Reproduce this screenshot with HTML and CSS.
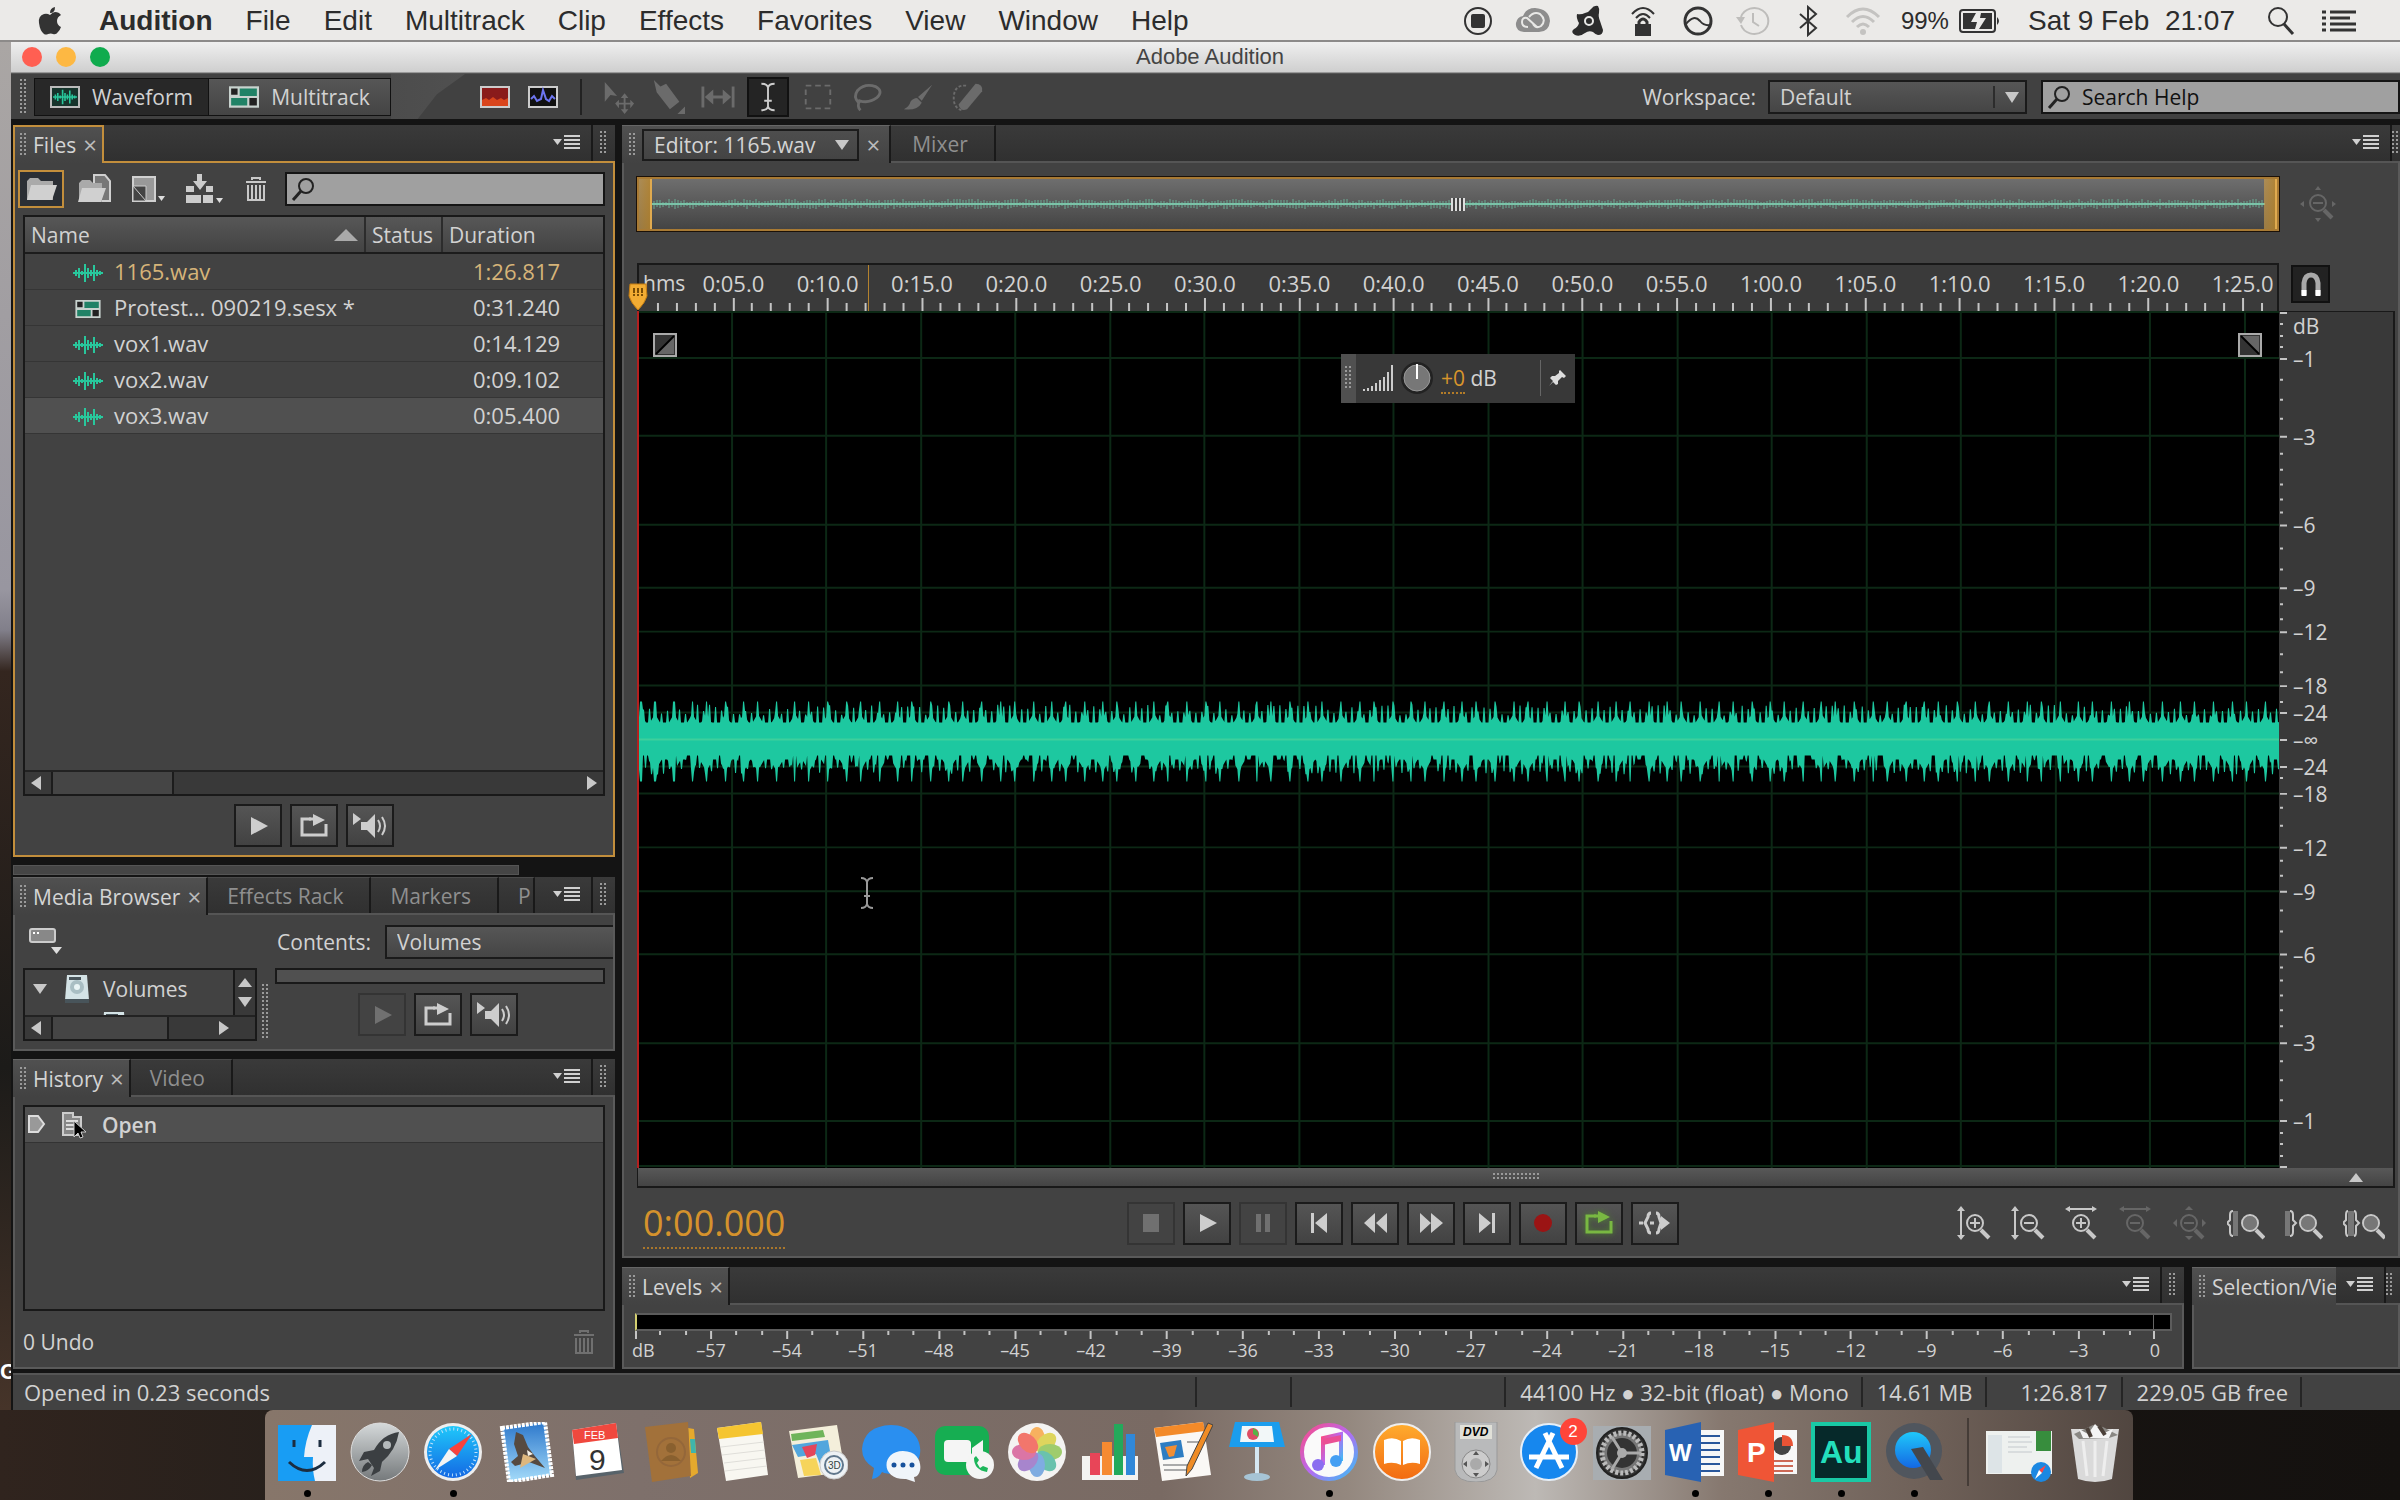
FILE: index.html
```html
<!DOCTYPE html>
<html lang="en">
<head>
<meta charset="utf-8">
<title>Adobe Audition</title>
<link rel="stylesheet" href="styles.css">
</head>
<body>
<svg class="defs" aria-hidden="true">
  <symbol id="wave" viewBox="0 0 30 20"><path d="M0 10h30M3 7v6M6 5v10M9 8v4M12 1v18M15 5v10M18 7v6M21 2v16M24 7v6M27 8v4" fill="none" stroke="#28c79c" stroke-width="2"/></symbol>
  <symbol id="multi" viewBox="0 0 28 20"><path d="M0 0h28v20H0z" fill="#c8d2ce"/><path d="M2 2h6v6H2zM19 11h7v7h-7z" fill="#222"/><path d="M10 2h16v7H10zM2 11h15v7H2z" fill="#208266"/></symbol>
  <symbol id="play" viewBox="0 0 30 24"><path d="M8 3v18l17-9z" fill="currentColor"/></symbol>
  <symbol id="loop" viewBox="0 0 30 24"><path d="M12 5H3v16h24V10" fill="none" stroke="currentColor" stroke-width="3"/><path d="M14 0l12 6-12 6z" fill="currentColor"/><path d="M10 5h6" stroke="currentColor" stroke-width="3"/></symbol>
  <symbol id="speaker" viewBox="0 0 34 26"><path d="M0 0l8 6-8 6zM8 9h6l8-8v24l-8-8H8z" fill="currentColor"/><path d="M25 7q4 6 0 12M29 4q6 9 0 18" fill="none" stroke="currentColor" stroke-width="2"/></symbol>
  <symbol id="menu" viewBox="0 0 28 18"><path d="M0 5h9l-4.500 6z" fill="currentColor"/><path d="M11 2h16M11 6h16M11 10h16M11 14h16" stroke="currentColor" stroke-width="2"/></symbol>
  <symbol id="find" viewBox="0 0 26 24"><circle cx="16" cy="9" r="7" fill="none" stroke="#222" stroke-width="2"/><path d="M11 14l-8 9" stroke="#222" stroke-width="3"/></symbol>
  <symbol id="trash" viewBox="0 0 22 24"><path d="M7 3V1h8v2M1 5h20M3 8v15h16V8" fill="none" stroke="currentColor" stroke-width="2"/><path d="M7 8v14M11 8v14M15 8v14" stroke="currentColor" stroke-width="2"/></symbol>
  <symbol id="lens" viewBox="0 0 30 30"><circle cx="12" cy="12" r="8" fill="none" stroke="currentColor" stroke-width="2"/><path d="M18 19l8 8" stroke="currentColor" stroke-width="4"/></symbol>
  <symbol id="disk" viewBox="0 0 26 30"><path d="M3 1h20l2 25H1z" fill="#d4e3e6"/><circle cx="13" cy="13" r="7" fill="#a9bec3"/><circle cx="13" cy="13" r="3" fill="#e9f4f5"/><path d="M5 3h12v3H5zM1 25h24v4H1z" fill="#48545a"/></symbol>
  <linearGradient id="steel" x2="0" y2="1"><stop stop-color="#d5d9da"/><stop offset="1" stop-color="#75797b"/></linearGradient>
  <linearGradient id="blue" x2="0" y2="1"><stop stop-color="#1fc8fa"/><stop offset="1" stop-color="#1468e4"/></linearGradient>
  <linearGradient id="sky" x2="0" y2="1"><stop stop-color="#2c77cb"/><stop offset="1" stop-color="#a5dcfa"/></linearGradient>
  <linearGradient id="amber" x2="0" y2="1"><stop stop-color="#ffac2e"/><stop offset="1" stop-color="#f26a12"/></linearGradient>
  <linearGradient id="ring" x2="1" y2="1"><stop stop-color="#fb4a84"/><stop offset=".5" stop-color="#b66af2"/><stop offset="1" stop-color="#35c3f6"/></linearGradient>
</svg>

<header class="menubar">
  <svg class="apple" width="26" height="30" viewBox="0 0 26 30"><path d="M18 1q-5 1-5 6 5 0 5-6zM13 9q-3-2-6-1Q1 10 2 17q1 8 5 11 2 1 4 0 3-1 5 0 3 1 5-2 2-2 3-5-4-2-4-6t4-6q-2-3-6-3-2 0-5 3z" fill="#333"/></svg>
  <nav class="menus"><b>Audition</b><a href="#">File</a><a href="#">Edit</a><a href="#">Multitrack</a><a href="#">Clip</a><a href="#">Effects</a><a href="#">Favorites</a><a href="#">View</a><a href="#">Window</a><a href="#">Help</a></nav>
  <div class="tray">
    <svg viewBox="0 0 36 32"><circle cx="18" cy="16" r="13" fill="none" stroke="#333" stroke-width="2"/><rect x="11" y="9" width="14" height="14" rx="2" fill="#333"/></svg>
    <svg viewBox="0 0 36 32"><path d="M9 27Q0 26 1 18q1-6 7-7Q11 3 20 3q14 1 15 13-1 11-11 11z" fill="#8d8d8d"/><path d="M22 22L12 13q-5-1-5 4t6 5M14 12q5-6 11-3 7 6 1 12-5 3-8-2" fill="none" stroke="#e8e8e6" stroke-width="2"/></svg>
    <svg viewBox="0 0 36 32"><path d="M28 1q2 3 1 7-1 3 1 8l3 9q0 5-5 5-2 0-5-3-4-2-8 1-5 4-10 2-5-3-1-6 4-2 5-6-3-5-2-9 4 1 8-1 4-1 6-4 3-4 7-3z" fill="#2c2c2c"/><circle cx="19" cy="16" r="4" fill="none" stroke="#e8e8e6" stroke-width="2"/></svg>
    <svg viewBox="0 0 36 32"><path d="M7 9Q18-3 29 9M11 13q7-8 14 0" fill="none" stroke="#333" stroke-width="2"/><path d="M14 20v-3q4-6 8 0v3" fill="none" stroke="#333" stroke-width="3"/><path d="M10 19h16v12H10z" fill="#333"/></svg>
    <svg viewBox="0 0 36 32"><circle cx="18" cy="16" r="13" fill="none" stroke="#333" stroke-width="3"/><path d="M6 19q8-10 14-3 4 5 10 4" fill="none" stroke="#333" stroke-width="2"/></svg>
    <svg viewBox="0 0 36 32"><path d="M6 20a14 13 0 1 0 0-8M18 8v9l6 4" fill="none" stroke="#bebdbb" stroke-width="2"/><path d="M1 12h9l-4 7z" fill="#bebdbb"/></svg>
    <svg viewBox="0 0 36 32"><path d="M10 9l16 14-8 7V2l8 7-16 14" fill="none" stroke="#333" stroke-width="2"/></svg>
    <svg viewBox="0 0 36 32"><path d="M2 12Q18-4 34 12M7 17q11-11 22 0M12 22q6-6 12 0" fill="none" stroke="#c4c3c1" stroke-width="3"/><circle cx="18" cy="27" r="3" fill="#c4c3c1"/></svg>
  </div>
  <span class="battery">99%</span>
  <svg width="42" height="24" viewBox="0 0 42 24"><rect x="1" y="1" width="35" height="22" rx="3" fill="none" stroke="#333" stroke-width="2"/><path d="M4 4h13l-5 9h6l-2 7H4zM22 4h11v16H20l7-11h-6z" fill="#333"/><path d="M38 8q4 4 0 8z" fill="#333"/></svg>
  <time>Sat 9 Feb&nbsp; 21:07</time>
  <svg class="spot" width="28" height="30" viewBox="0 0 28 30"><circle cx="11" cy="11" r="9" fill="none" stroke="#333" stroke-width="2"/><path d="M17 18l9 10" stroke="#333" stroke-width="3"/></svg>
  <svg width="36" height="22" viewBox="0 0 36 22"><path d="M0 2h4M8 2h26M0 8h4M8 8h20M0 14h4M8 14h26M0 20h4M8 20h26" stroke="#333" stroke-width="3"/></svg>
</header>

<div class="desktop">
<span class="desk-label">G</span>
<main class="window">
  <div class="titlebar"><i class="red"></i><i class="yellow"></i><i class="green"></i><h1>Adobe Audition</h1></div>

  <div class="toolbar">
    <span class="grip"></span>
    <div class="modes">
      <button class="mode on"><svg width="30" height="22"><rect x="1" y="1" width="28" height="20" fill="#17342c" stroke="#bbb" stroke-width="2"/><use href="#wave" x="3" y="3" width="24" height="16"/></svg>Waveform</button>
      <button class="mode"><svg width="30" height="22"><use href="#multi" width="30" height="22"/></svg>Multitrack</button>
    </div>
    <div class="swoosh"></div>
    <div class="views">
      <button aria-label="Spectral frequency"><svg width="30" height="22"><rect x="1" y="1" width="28" height="20" fill="#8a1b1b" stroke="#ccc" stroke-width="2"/><path d="M2 20v-6l4-2 3 2 4-3 4 3 4-2 3 2 4-2v8z" fill="#d9451c"/></svg></button>
      <button aria-label="Spectral pitch"><svg width="30" height="22"><rect x="1" y="1" width="28" height="20" fill="#111" stroke="#ccc" stroke-width="2"/><path d="M3 13l3-3 3 5 4-2 2-9 3 9 3 2 3-5 3 3" fill="none" stroke="#6d75ef" stroke-width="2"/></svg></button>
    </div>
    <div class="tools">
      <button aria-label="Move"><svg viewBox="0 0 36 36"><path d="M4 2l13 15-7-1-6 7zM25 14l4 5h-3v5h5v-3l4 4-4 5v-4h-5v5h3l-4 5-4-5h3v-5h-5v4l-4-5 4-4v3h5v-5h-3z" fill="currentColor"/></svg></button>
      <button aria-label="Razor"><svg viewBox="0 0 36 36"><path d="M3 0l7 7 6-3 14 19-10 8L6 13zM28 36h8v-8z" fill="currentColor"/></svg></button>
      <button aria-label="Slip"><svg viewBox="0 0 36 36"><path d="M2 7v22M34 7v22M8 18h20" stroke="currentColor" stroke-width="3"/><path d="M13 10v16l-9-8zM23 10v16l9-8z" fill="currentColor"/></svg></button>
      <button class="on" aria-label="Time selection"><svg viewBox="0 0 36 36"><path d="M11 4q6 0 7 4 1-4 7-4M18 8v20M11 32q6 0 7-4 1 4 7 4M14 22h8" fill="none" stroke="#ccc" stroke-width="2"/></svg></button>
      <button aria-label="Marquee"><svg viewBox="0 0 36 36"><path d="M5 6h26v24H5z" fill="none" stroke="currentColor" stroke-width="2" stroke-dasharray="6 4"/></svg></button>
      <button aria-label="Lasso"><svg viewBox="0 0 36 36"><path d="M8 24Q2 18 7 11q8-8 19-4 9 5 1 12-8 6-18 3-3 6 1 10" fill="none" stroke="currentColor" stroke-width="3"/></svg></button>
      <button aria-label="Brush"><svg viewBox="0 0 36 36"><path d="M33 5L22 22l-4-4zM17 19l5 5q-5 9-19 7 6-3 7-8 3-4 7-4z" fill="currentColor"/></svg></button>
      <button aria-label="Spot healing"><svg viewBox="0 0 36 36"><path d="M26 4q8 0 7 8L17 31q-7 3-9-5z" fill="currentColor"/><path d="M16 6Q4 5 3 17t8 15" fill="none" stroke="currentColor" stroke-width="2" stroke-dasharray="3 2"/></svg></button>
    </div>
    <label class="workspace" for="ws">Workspace:</label>
    <div class="select ws"><select id="ws"><option>Default</option></select></div>
    <div class="search help"><svg width="26" height="24"><use href="#find"/></svg><input aria-label="Search Help" value="Search Help"></div>
  </div>

  <div class="work">
    <div class="left">
      <section class="panel files focus">
        <div class="tabs"><div class="tab on"><span class="grip"></span>Files<button class="x" aria-label="Close">×</button></div><div class="rest"></div><button class="pm" aria-label="Panel menu"><svg width="28" height="18"><use href="#menu"/></svg></button><div class="end"><span class="grip"></span></div></div>
        <div class="body">
          <div class="filebar">
            <button class="open" aria-label="Open file"><svg width="32" height="26"><path d="M2 24V5l3-3h8l3 3h12v19z" fill="#aaa"/><path d="M2 24L6 9h26l-5 15z" fill="#d0d0d0"/></svg></button>
            <button aria-label="Open append"><svg width="34" height="30"><path d="M17 1h11l5 6v20H17z" fill="#777" stroke="#d0d0d0" stroke-width="2"/><path d="M2 28V9l3-3h8l3 3h9v19z" fill="#aaa"/><path d="M1 28L5 14h24l-5 14z" fill="#d0d0d0"/></svg></button>
            <button aria-label="New file"><svg width="34" height="28"><path d="M2 2h22v24H2z" fill="#999" stroke="#d0d0d0" stroke-width="2"/><path d="M2 11l13 15H2zM2 11h13v15" fill="#444" stroke="#ccc"/><path d="M27 21h7l-3.500 5z" fill="#ddd"/></svg></button>
            <button aria-label="Insert into multitrack"><svg width="38" height="30"><path d="M1 12h8v6H1zM21 12h7v6h-7zM1 21h15v8H1zM18 21h10v8H18zM12 0h5v7h5l-7 9-7-9h4z" fill="#ccc"/><path d="M31 24h7l-3.500 5z" fill="#ddd"/></svg></button>
            <button class="del" aria-label="Delete"><svg width="22" height="24"><use href="#trash"/></svg></button>
            <div class="search"><svg width="26" height="24"><use href="#find"/></svg><input aria-label="Search files"></div>
          </div>
          <div class="listbox">
            <table>
              <thead><tr><th class="c1">Name<svg width="24" height="12"><path d="M0 12h24L12 0z" fill="#aaa"/></svg></th><th class="c2">Status</th><th>Duration</th></tr></thead>
              <tbody>
                <tr class="cur"><td><svg width="30" height="20"><use href="#wave"/></svg>1165.wav</td><td></td><td>1:26.817</td></tr>
                <tr><td><svg width="30" height="18"><use href="#multi"/></svg>Protest... 090219.sesx *</td><td></td><td>0:31.240</td></tr>
                <tr><td><svg width="30" height="20"><use href="#wave"/></svg>vox1.wav</td><td></td><td>0:14.129</td></tr>
                <tr><td><svg width="30" height="20"><use href="#wave"/></svg>vox2.wav</td><td></td><td>0:09.102</td></tr>
                <tr class="sel"><td><svg width="30" height="20"><use href="#wave"/></svg>vox3.wav</td><td></td><td>0:05.400</td></tr>
              </tbody>
            </table>
            <div class="hscroll"><i class="al"></i><i class="thumb"></i><i class="ar"></i></div>
          </div>
          <div class="player">
            <button class="btn" aria-label="Play"><svg width="30" height="24"><use href="#play"/></svg></button>
            <button class="btn" aria-label="Loop"><svg width="30" height="24"><use href="#loop"/></svg></button>
            <button class="btn" aria-label="Auto-play"><svg width="34" height="26"><use href="#speaker"/></svg></button>
          </div>
        </div>
      </section>
      <div class="trackbar"><i></i></div>

      <section class="panel media">
        <div class="tabs"><div class="tab on"><span class="grip"></span>Media Browser<button class="x" aria-label="Close">×</button></div><div class="tab wide">Effects Rack</div><div class="tab wide">Markers</div><div class="tab wide cut">P</div><div class="rest"></div><button class="pm" aria-label="Panel menu"><svg width="28" height="18"><use href="#menu"/></svg></button><div class="end"><span class="grip"></span></div></div>
        <div class="body">
          <div class="mediabar">
            <button aria-label="Drives"><svg width="34" height="28"><rect x="1" y="1" width="25" height="13" rx="2" fill="#888" stroke="#ccc" stroke-width="2"/><path d="M4 5h2M8 5h2" stroke="#fff" stroke-width="2"/><path d="M22 19h11l-5.500 7z" fill="#ddd"/></svg></button>
            <label for="ct">Contents:</label>
            <div class="select ct"><select id="ct"><option>Volumes</option></select></div>
          </div>
          <div class="mediagrid">
            <div class="tree">
              <div class="treemain">
                <div class="treelist"><div class="node"><i class="ad"></i><svg width="26" height="30"><use href="#disk"/></svg>Volumes</div><div class="node child"><svg width="26" height="30"><use href="#disk"/></svg></div></div>
                <div class="vscroll"><i class="au"></i><i class="ad"></i></div>
              </div>
              <div class="hscroll"><i class="al"></i><i class="thumb"></i><i class="ar"></i><i class="corner"></i></div>
            </div>
            <span class="grip split"></span>
            <div class="preview">
              <div class="strip"></div>
              <div class="player">
                <button class="btn" disabled aria-label="Play"><svg width="30" height="24"><use href="#play"/></svg></button>
                <button class="btn" aria-label="Loop"><svg width="30" height="24"><use href="#loop"/></svg></button>
                <button class="btn" aria-label="Auto-play"><svg width="34" height="26"><use href="#speaker"/></svg></button>
              </div>
            </div>
          </div>
        </div>
      </section>

      <section class="panel history">
        <div class="tabs"><div class="tab on"><span class="grip"></span>History<button class="x" aria-label="Close">×</button></div><div class="tab wide">Video</div><div class="rest"></div><button class="pm" aria-label="Panel menu"><svg width="28" height="18"><use href="#menu"/></svg></button><div class="end"><span class="grip"></span></div></div>
        <div class="body">
          <div class="listbox"><div class="step"><svg width="18" height="20"><path d="M1 1h9l6 8-6 8H1z" fill="#999" stroke="#ddd" stroke-width="2"/></svg><svg width="26" height="28"><path d="M2 2h10v4h8v18H2z" fill="#888" stroke="#ccc" stroke-width="2"/><path d="M5 10h12M5 14h12M5 18h9" stroke="#ddd" stroke-width="2"/><path d="M13 10v16l4-4 2 5 3-1-2-5h5z" fill="#000" stroke="#ccc"/></svg><b>Open</b></div></div>
          <div class="undo"><span>0 Undo</span><svg width="22" height="24"><use href="#trash"/></svg></div>
        </div>
      </section>
    </div>

    <div class="right">
      <section class="panel editor">
        <div class="tabs"><div class="tab on"><span class="grip"></span><button class="picker">Editor: 1165.wav<i class="ad"></i></button><button class="x" aria-label="Close">×</button></div><div class="tab mixer">Mixer</div><div class="rest"></div><button class="pm" aria-label="Panel menu"><svg width="28" height="18"><use href="#menu"/></svg></button><div class="end half"><span class="grip"></span></div></div>
        <div class="body">
          <div class="stage">
            <div class="overview"><svg id="mini" viewBox="0 0 1638 50" preserveAspectRatio="none"></svg><i class="handle"></i><i class="mid"></i><i class="handle"></i></div>
            <div class="side fit"><svg class="dim" width="38" height="38"><use href="#lens" x="7" y="6" width="30" height="30"/><path d="M14 18h10" stroke="currentColor" stroke-width="2"/><path d="M19 1l3 4h-6zM19 37l3-4h-6zM1 19l4-3v6zM37 19l-4-3v6z" fill="currentColor"/></svg></div>
            <div class="ruler"><svg id="ticks" viewBox="0 0 1641 46" preserveAspectRatio="none"></svg><div id="times"><span class="hms">hms</span></div><i class="hover"></i><svg class="head" width="20" height="28"><path d="M2 1h16l1 12q-2 7-9 14Q3 20 1 13z" fill="#f2ac33" stroke="#c47d12"/><path d="M6 5v8M10 5v8M14 5v8" stroke="#7a4d05" stroke-width="2" stroke-dasharray="5 1"/></svg></div>
            <div class="side snapbox"><button class="snap" aria-label="Snapping"><svg width="24" height="26"><path d="M5 24V12q1-8 7-8t7 8v12" fill="none" stroke="#aaa" stroke-width="5"/><path d="M5 25v-6M19 25v-6" stroke="#fff" stroke-width="5"/></svg></button></div>
            <div class="canvas">
              <svg id="plot" viewBox="0 0 1641 858" preserveAspectRatio="none"></svg>
              <i class="playhead"></i>
              <svg class="fade in" width="24" height="24"><path d="M1 1h22v22H1z" fill="#333" stroke="#aaa" stroke-width="2"/><path d="M3 21L21 3v18z" fill="#666"/><path d="M3 21L21 3" stroke="#000" stroke-width="2"/></svg>
              <svg class="fade out" width="24" height="24"><path d="M1 1h22v22H1z" fill="#333" stroke="#aaa" stroke-width="2"/><path d="M3 3l18 18V3z" fill="#666"/><path d="M3 3l18 18" stroke="#000" stroke-width="2"/></svg>
              <div class="hud"><span class="hgrip"><span class="grip"></span></span><svg width="30" height="26"><path d="M1 26v-2M5 26v-3M9 26v-5M13 26v-8M17 26V15M21 26V12M25 26V7M29 26V0" stroke="#ccc" stroke-width="2"/></svg><svg width="34" height="34"><circle cx="17" cy="17" r="16" fill="#222"/><circle cx="17" cy="17" r="13" fill="#777" stroke="#999"/><path d="M17 3v15" stroke="#fff" stroke-width="2"/></svg><span class="gain"><a href="#">+0</a> dB</span><svg class="pin" width="18" height="18"><path d="M11 1l6 6-2 2-2-1-4 4v3l-2 1-3-3-4 4 4-5-3-3 2-2h3l4-3V2z" fill="#ddd"/></svg></div>
              <svg class="ibeam" width="16" height="32"><path d="M2 1q5 0 6 4 1-4 6-4M8 5v22M2 31q5 0 6-4 1 4 6 4M5 19h6" fill="none" stroke="#999" stroke-width="2"/></svg>
            </div>
            <div class="scale"><svg id="dbticks" viewBox="0 0 8 858" preserveAspectRatio="none"></svg><div id="dbs"><span class="unit">dB</span></div></div>
            <div class="zoomstrip"><span class="grip"></span><i class="au"></i></div>
          </div>
          <div class="transport">
            <output><span>0:00.000</span></output>
            <div class="buttons">
              <button class="btn" disabled aria-label="Stop"><svg width="30" height="24"><path d="M7 3h16v18H7z" fill="currentColor"/></svg></button>
              <button class="btn" aria-label="Play"><svg width="30" height="24"><use href="#play"/></svg></button>
              <button class="btn" disabled aria-label="Pause"><svg width="30" height="24"><path d="M8 3h5v18H8zM17 3h5v18h-5z" fill="currentColor"/></svg></button>
              <button class="btn" aria-label="To start"><svg width="30" height="24"><path d="M7 2h3v20H7zM23 2v20l-12-10z" fill="currentColor"/></svg></button>
              <button class="btn" aria-label="Rewind"><svg width="30" height="24"><path d="M15 2v20L4 12zM27 2v20L16 12z" fill="currentColor"/></svg></button>
              <button class="btn" aria-label="Forward"><svg width="30" height="24"><path d="M4 2v20l11-10zM15 2v20l12-10z" fill="currentColor"/></svg></button>
              <button class="btn" aria-label="To end"><svg width="30" height="24"><path d="M7 2v20l12-10zM20 2h3v20h-3z" fill="currentColor"/></svg></button>
              <button class="btn" aria-label="Record"><svg width="30" height="24"><circle cx="15" cy="12" r="9" fill="#9b1414"/></svg></button>
              <button class="btn looping" aria-label="Loop"><svg width="30" height="24"><use href="#loop"/></svg></button>
              <button class="btn" aria-label="Skip selection"><svg width="32" height="26"><path d="M12 3q-3 0-3 4l-3 6 3 6q0 4 3 4M17 3q3 0 3 4l2 6-2 6q0 4-3 4M0 13h4M11 13h4" fill="none" stroke="currentColor" stroke-width="3"/><path d="M22 6l9 7-9 7z" fill="currentColor"/></svg></button>
            </div>
            <div class="zooms">
              <button aria-label="Zoom in amplitude"><svg width="34" height="34"><path d="M4 4v26M13 17h10M18 12v10" stroke="currentColor" stroke-width="2"/><path d="M4 0l4 5H0zM4 34l4-5H0z" fill="currentColor"/><use href="#lens" x="6" y="5" width="30" height="30"/></svg></button>
              <button aria-label="Zoom out amplitude"><svg width="34" height="34"><path d="M4 4v26M13 17h10" stroke="currentColor" stroke-width="2"/><path d="M4 0l4 5H0zM4 34l4-5H0z" fill="currentColor"/><use href="#lens" x="6" y="5" width="30" height="30"/></svg></button>
              <button aria-label="Zoom in time"><svg width="34" height="34"><path d="M4 3h24M11 17h10M16 12v10" stroke="currentColor" stroke-width="2"/><path d="M0 3l5-3v6zM32 3l-5-3v6z" fill="currentColor"/><use href="#lens" x="4" y="5" width="30" height="30"/></svg></button>
              <button class="dim" aria-label="Zoom out time"><svg width="34" height="34"><path d="M4 3h24M11 17h10" stroke="currentColor" stroke-width="2"/><path d="M0 3l5-3v6zM32 3l-5-3v6z" fill="currentColor"/><use href="#lens" x="4" y="5" width="30" height="30"/></svg></button>
              <button class="dim" aria-label="Zoom out full"><svg width="34" height="34"><path d="M11 17h10" stroke="currentColor" stroke-width="2"/><path d="M16 0l4 4h-8zM16 34l4-4h-8zM0 17l4-4v8zM33 17l-4-4v8z" fill="currentColor"/><use href="#lens" x="4" y="5" width="30" height="30"/></svg></button>
              <button aria-label="Zoom to in point"><svg width="38" height="34"><path d="M6 5h5v25H6z" fill="#777"/><path d="M6 5q-3 0-3 4v5l-3 3 3 3v6q0 4 3 4" fill="none" stroke="currentColor" stroke-width="2"/><circle cx="23" cy="17" r="7" fill="#777"/><use href="#lens" x="11" y="5" width="30" height="30"/></svg></button>
              <button aria-label="Zoom to out point"><svg width="38" height="34"><path d="M0 5h5v25H0z" fill="#777"/><path d="M5 5q3 0 3 4v5l3 3-3 3v6q0 4-3 4" fill="none" stroke="currentColor" stroke-width="2"/><circle cx="23" cy="17" r="7" fill="#777"/><use href="#lens" x="11" y="5" width="30" height="30"/></svg></button>
              <button aria-label="Zoom to selection"><svg width="42" height="34"><path d="M5 5h6v25H5z" fill="#777"/><path d="M5 5q-2 0-2 4v5l-3 3 3 3v6q0 4 2 4M11 5q2 0 2 4v5l3 3-3 3v6q0 4-2 4" fill="none" stroke="currentColor" stroke-width="2"/><circle cx="28" cy="17" r="7" fill="#777"/><use href="#lens" x="16" y="5" width="30" height="30"/></svg></button>
            </div>
          </div>
        </div>
      </section>
      <div class="lower">
        <section class="panel levels">
          <div class="tabs"><div class="tab on"><span class="grip"></span>Levels<button class="x" aria-label="Close">×</button></div><div class="rest"></div><button class="pm" aria-label="Panel menu"><svg width="28" height="18"><use href="#menu"/></svg></button><div class="end"><span class="grip"></span></div></div>
          <div class="body"><div class="meter"></div><div class="marks"><svg id="lticks" viewBox="0 0 1518 8" preserveAspectRatio="none"></svg><div id="lnums"><span class="first">dB</span></div></div></div>
        </section>
        <section class="panel selview">
          <div class="tabs"><div class="tab on clip"><span class="grip"></span>Selection/View</div><button class="pm" aria-label="Panel menu"><svg width="28" height="18"><use href="#menu"/></svg></button><div class="end half"><span class="grip"></span></div></div>
          <div class="body"></div>
        </section>
      </div>
    </div>
  </div>

  <footer class="status"><span class="msg">Opened in 0.23 seconds</span><span class="s1"></span><span class="s2"></span><span class="s3">44100 Hz ● 32-bit (float) ● Mono</span><span class="s4">14.61 MB</span><span class="s5">1:26.817</span><span class="s6">229.05 GB free</span></footer>
</main>
</div>

<div class="dockarea"><div class="dock">
  <button class="on" aria-label="Finder"><svg viewBox="0 0 60 60"><path d="M1 3h58v56H1z" fill="#edf1f8"/><path d="M1 3h34q-7 16-8 32h9q-1 12 2 24H1z" fill="#189df4"/><path d="M17 18v7M43 18v7M12 40q18 17 36 0" fill="none" stroke="#1c2d40" stroke-width="3"/></svg></button>
  <button aria-label="Launchpad"><svg viewBox="0 0 60 60"><circle cx="30" cy="30" r="29" fill="url(#steel)" stroke="#ddd"/><path d="M49 10q-16 2-25 18l-10 2-5 9 9-2 6 9-3 8 9-5 2-9Q46 28 49 10z" fill="#3b3f42"/><circle cx="37" cy="23" r="4" fill="#b5babc"/><path d="M18 40q-6 3-6 10 7-1 10-7z" fill="#3b3f42"/></svg></button>
  <button class="on" aria-label="Safari"><svg viewBox="0 0 60 60"><circle cx="30" cy="30" r="29" fill="#eee"/><circle cx="30" cy="30" r="26" fill="url(#blue)"/><circle cx="30" cy="30" r="23" fill="none" stroke="#bfe2fb" stroke-width="3" stroke-dasharray="1 3"/><path d="M49 12L34 34l-8-7z" fill="#f8423c"/><path d="M12 48l22-14-8-7z" fill="#f4f4f4"/></svg></button>
  <button aria-label="Mail"><svg viewBox="0 0 60 60"><path d="M6 6L49 0l7 53-43 7z" fill="url(#sky)" stroke="#fff" stroke-width="4" stroke-dasharray="3 1"/><path d="M20 10l7 3 5 12 6 8 11 13-16-6-14 4-4-4 7-6-4-12z" fill="#564a40"/><path d="M27 32l13 5-16 9z" fill="#ddb77e"/><path d="M31 28l6 4-5 2z" fill="#f4f1e8"/></svg></button>
  <button aria-label="Calendar"><svg viewBox="0 0 60 60"><path d="M3 9L47 1l8 50-48 7z" fill="#58636a"/><path d="M3 8L47 1l6 47-46 6z" fill="#fff"/><path d="M3 8L47 1l2 15L5 22z" fill="#f0483e"/><text x="15" y="17" font-size="11" fill="#fff">FEB</text><text x="20" y="48" font-size="30" fill="#333">9</text></svg></button>
  <button aria-label="Contacts"><svg viewBox="0 0 60 60"><path d="M46 6l6 1 4 44-8 5z" fill="#e5a92d"/><path d="M48 17h5l1 14h-5z" fill="#3fb5ac"/><path d="M3 5L46 0l3 54-39 6z" fill="#a2713a"/><circle cx="29" cy="30" r="14" fill="none" stroke="#94673a" stroke-width="2"/><circle cx="29" cy="26" r="5" fill="#89602f"/><path d="M19 39q10-12 20 0z" fill="#89602f"/></svg></button>
  <button aria-label="Notes"><svg viewBox="0 0 60 60"><path d="M2 6L46 0l7 53-42 6z" fill="#f8f7f1"/><path d="M2 6L46 0l2 12L4 17z" fill="#f5c531"/><path d="M6 25l43-5M7 33l43-5M9 41l42-5M10 49l42-5" stroke="#dfded9" stroke-width="1"/></svg></button>
  <button aria-label="Maps"><svg viewBox="0 0 60 60"><path d="M1 9L49 3l8 47-47 6z" fill="#f4efdb"/><path d="M3 12l32-4 2 7-33 4z" fill="#6fb45a"/><path d="M4 23l36-5 5 28-11 1-6-15-18 3z" fill="#52a6dd"/><path d="M12 38l16-2 5 17-17 1z" fill="#f6d45a"/><path d="M14 25l15-3-2 11-8 3z" fill="#e4465b"/><circle cx="46" cy="43" r="14" fill="#eef2f5" stroke="#ccc"/><circle cx="46" cy="43" r="9" fill="none" stroke="#60778c" stroke-width="2"/><text x="40" y="47" font-size="10" fill="#344">3D</text></svg></button>
  <button aria-label="Messages"><svg viewBox="0 0 60 60"><path d="M30 3c38 0 39 48 3 49q-8 0-12-2-3 6-10 7l2-11Q1 39 1 27 3 4 30 3z" fill="#2a8ff0"/><path d="M42 29c22 0 20 26 11 26l1 5-9-3c-26 1-25-28-3-28z" fill="#f0f5fa"/><path d="M33 43h0M42 43h0M51 43h0" stroke="#16519c" stroke-width="5" stroke-linecap="round"/></svg></button>
  <button aria-label="FaceTime"><svg viewBox="0 0 60 60"><rect x="1" y="4" width="54" height="49" rx="10" fill="#16ae52"/><rect x="10" y="18" width="27" height="22" rx="4" fill="#f5f5f5"/><path d="M38 26l11-8v22l-11-7z" fill="#f5f5f5"/><circle cx="46" cy="43" r="14" fill="#f4f5f4"/><path d="M40 36q0 12 13 14l1-4-5-2-3 2-3-5 2-3-3-4z" fill="#1cb65a"/></svg></button>
  <button aria-label="Photos"><svg viewBox="0 0 60 60"><circle cx="30" cy="30" r="29" fill="#f4f3f2"/><g opacity=".8"><ellipse cx="30" cy="17" rx="8" ry="12" fill="#f8a13b"/><ellipse cx="39" cy="21" rx="8" ry="12" fill="#d9ce38" transform="rotate(45 39 21)"/><ellipse cx="43" cy="30" rx="12" ry="8" fill="#8ac34c"/><ellipse cx="39" cy="39" rx="12" ry="8" fill="#48b69d" transform="rotate(45 39 39)"/><ellipse cx="30" cy="43" rx="8" ry="12" fill="#629bdd"/><ellipse cx="21" cy="39" rx="8" ry="12" fill="#946ac5" transform="rotate(45 21 39)"/><ellipse cx="17" cy="30" rx="12" ry="8" fill="#d65692"/><ellipse cx="21" cy="21" rx="12" ry="8" fill="#f2584b" transform="rotate(45 21 21)"/></g></svg></button>
  <button aria-label="Numbers"><svg viewBox="0 0 60 60"><path d="M2 34h56v24H2z" fill="#f3f2f0"/><path d="M10 31h10v22H10z" fill="#e84558"/><path d="M22 20h10v33H22z" fill="#f68a31"/><path d="M34 2h9v51h-9z" fill="#23a95b"/><path d="M46 12h9v41h-9z" fill="#3088d9"/></svg></button>
  <button aria-label="Pages"><svg viewBox="0 0 60 60"><path d="M1 6L50 0l8 53-49 6z" fill="#faf8f5"/><path d="M1 6L50 0l2 9L3 15z" fill="#f38a29"/><path d="M7 21l21-3 3 17-21 3z" fill="#2e7dc2"/><path d="M12 25l12-2-3 11-5 1z" fill="#f18e34"/><path d="M34 20h14M10 43h30M11 48h27" stroke="#aaa" stroke-width="2"/><path d="M55 1l5 2-21 44-6 7 1-10z" fill="#ef8c26" stroke="#444"/></svg></button>
  <button aria-label="Keynote"><svg viewBox="0 0 60 60"><path d="M29 25h4v30h-4z" fill="#d5e7f2"/><ellipse cx="31" cy="55" rx="13" ry="4" fill="#a6c4d5"/><path d="M9 0h44l6 25H3z" fill="#1b9ded"/><path d="M16 4h30l2 16H14z" fill="#f2f7f8"/><circle cx="27" cy="12" r="6" fill="#dd4d65"/><path d="M27 12V6q7 3 5 9z" fill="#58b447"/></svg></button>
  <button class="on" aria-label="iTunes"><svg viewBox="0 0 60 60"><circle cx="30" cy="30" r="27" fill="#fafafa" stroke="url(#ring)" stroke-width="4"/><path d="M24 43V16l18-4v27" fill="none" stroke="url(#ring)" stroke-width="4"/><path d="M24 17l18-4v6l-18 4z" fill="#ea4f94"/><circle cx="19" cy="43" r="6" fill="#8b6ef0"/><circle cx="37" cy="39" r="6" fill="#459ff3"/></svg></button>
  <button aria-label="iBooks"><svg viewBox="0 0 60 60"><circle cx="30" cy="30" r="28" fill="url(#amber)" stroke="#eee" stroke-width="2"/><path d="M29 19q-8-5-17-1v24q9-3 17 1zM31 19q8-5 17-1v24q-9-3-17 1z" fill="#fff"/></svg></button>
  <button aria-label="DVD Player"><svg viewBox="0 0 60 60"><path d="M9 0h42v48q-2 12-21 12T9 48z" fill="#b9babb" stroke="#999"/><path d="M14 3h32v14H14z" fill="#e0e0d8"/><text x="17" y="14" font-size="12" font-weight="bold" font-style="italic">DVD</text><circle cx="30" cy="42" r="14" fill="#ccc" stroke="#888"/><circle cx="30" cy="42" r="6" fill="#aaa"/><path d="M30 29l3 4h-6zM30 55l3-4h-6zM17 42l4-3v6zM43 42l-4-3v6z" fill="#555"/></svg></button>
  <button aria-label="App Store"><svg viewBox="0 0 60 60"><circle cx="30" cy="30" r="28" fill="#1687ee" stroke="#e6eff8" stroke-width="2"/><path d="M34 11L17 46M26 11l17 35M10 35h40" stroke="#fff" stroke-width="5"/></svg><span class="badge">2</span></button>
  <button aria-label="System Preferences"><svg viewBox="0 0 60 60"><path d="M1 4h58v54H1z" fill="#a8adb1"/><circle cx="30" cy="31" r="25" fill="#333" stroke="#222" stroke-width="2"/><circle cx="30" cy="31" r="20" fill="#777" stroke="#bbb" stroke-width="5" stroke-dasharray="3 2"/><circle cx="30" cy="31" r="15" fill="#333"/><path d="M30 31h19M30 31L20 15M30 31L20 47" stroke="#aaa" stroke-width="3"/><circle cx="30" cy="31" r="5" fill="#aaa"/></svg></button>
  <button class="on" aria-label="Word"><svg viewBox="0 0 60 60"><path d="M30 8h29v46H30z" fill="#f7f7f7"/><path d="M36 14h19M36 21h19M36 28h19M36 35h19M36 42h19M36 49h19" stroke="#29579b" stroke-width="2"/><path d="M0 8L36 0v60L0 53z" fill="#2862b3"/><text x="4" y="39" font-size="24" font-weight="bold" fill="#fff">W</text></svg></button>
  <button class="on" aria-label="PowerPoint"><svg viewBox="0 0 60 60"><path d="M30 8h29v44H30z" fill="#f7f7f7"/><circle cx="44" cy="24" r="9" fill="#444"/><path d="M44 24V13q11 0 11 11z" fill="#e85335"/><path d="M36 39h19M36 44h19M36 49h19" stroke="#cc6956" stroke-width="2"/><path d="M0 8L36 0v60L0 53z" fill="#ef5536"/><text x="9" y="40" font-size="28" font-weight="bold" fill="#fff">P</text></svg></button>
  <button class="on" aria-label="Audition"><svg viewBox="0 0 60 60"><path d="M2 2h56v56H2z" fill="#06292a" stroke="#19c9a5" stroke-width="4"/><text x="9" y="41" font-size="32" font-weight="bold" fill="#23dfbc">Au</text></svg></button>
  <button class="on" aria-label="QuickTime"><svg viewBox="0 0 60 60"><circle cx="30" cy="29" r="28" fill="#50565e"/><circle cx="29" cy="28" r="18" fill="url(#blue)"/><path d="M27 27l12-2 20 33H46z" fill="#43474d"/></svg></button>
  <span class="sep"></span>
  <button class="winthumb" aria-label="Minimised window"><svg viewBox="0 0 66 60"><path d="M0 9h66v43H0z" fill="#eef1ef"/><path d="M2 13h14v38H2z" fill="#dde4e7"/><path d="M22 15h22M22 20h24M22 25h19M22 30h24" stroke="#c3c8cc" stroke-width="1"/><path d="M50 9h15v20H50z" fill="#378d3d"/><circle cx="55" cy="50" r="10" fill="#1b88e2"/><path d="M60 43l-4 8-3-3z" fill="#f44"/><path d="M49 57l7-6-3-3z" fill="#fff"/></svg></button>
  <button aria-label="Trash"><svg viewBox="0 0 60 60"><path d="M6 7h48l-7 50q-17 6-34 0z" fill="#dadada"/><path d="M9 12l19-9 10 2 15 8-9 3-30 1z" fill="#898783"/><path d="M14 7l9 5 7-10 9 9 9-4-4 9H18z" fill="#f4f4f4"/><path d="M22 6l4 9M34 4l6 9" stroke="#4b4039" stroke-width="4"/><path d="M18 19l4 35M30 19v36M42 19l-4 35" stroke="#eee" stroke-width="3"/></svg></button>
</div></div>
<script src="script.js"></script>
</body>
</html>
```
FILE: styles.css
```css
* { box-sizing: border-box; }
body { margin: 0; height: 100vh; min-width: 1800px; display: flex; flex-direction: column; overflow: hidden; background: #211a17; color: #d2d2d2; font: 500 21px/28px "Open Sans", "Noto Sans", sans-serif; }
button { margin: 0; padding: 0; border: 0; background: none; color: inherit; font: inherit; display: flex; align-items: center; justify-content: center; }
svg { display: block; flex: none; }
.defs { position: absolute; width: 0; height: 0; }
.grip { flex: none; width: 8px; height: 24px; background: radial-gradient(circle at 1px 1px, #9a9a9a 1px, transparent 1px) 0 0 / 4px 4px; }
.dim { color: #666; }
.al, .ar, .au, .ad { flex: none; width: 0; height: 0; border: 7px solid transparent; }
.al { border-right: 10px solid #c8c8c8; border-left: 0; }
.ar { border-left: 10px solid #c8c8c8; border-right: 0; }
.au { border-bottom: 9px solid #c8c8c8; border-top: 0; }
.ad { border-top: 10px solid #c8c8c8; border-bottom: 0; }

/* System menu bar */
.menubar { height: 42px; flex: none; display: flex; align-items: center; padding: 1px 42px 0 37px; background: #ebeae8; border-bottom: 2px solid #8c8a89; color: #2c2c2c; font: 28px/40px "Liberation Sans", Arial, sans-serif; }
.menus { display: flex; gap: 33px; margin-left: 36px; flex: 1; }
.menus a { color: inherit; text-decoration: none; }
.tray { display: flex; gap: 19px; }
.tray svg { width: 36px; height: 32px; }
.battery { margin: 0 10px 0 20px; font-size: 24px; }
.menubar time { margin-left: 27px; white-space: nowrap; }
.spot { margin: 0 27px 0 32px; }

.desktop { flex: 1; min-height: 0; padding-left: 11px; display: flex; position: relative; background: linear-gradient(#aaa6a4, #9896a0 40%, #817f8a 43%, #34261f 46%, #1c1b19 75%, #463429); }
.desk-label { position: absolute; left: 0; bottom: 24px; width: 11px; overflow: hidden; color: #fff; font: bold 22px/28px "Liberation Sans", sans-serif; }
.window { position: relative; flex: 1; min-width: 0; display: flex; flex-direction: column; background: #141414; }
.titlebar { flex: none; height: 31px; display: flex; align-items: center; gap: 14px; padding-left: 11px; background: linear-gradient(#efefef, #cfcfcf); border-bottom: 1px solid #999; }
.titlebar i { width: 20px; height: 20px; border-radius: 50%; background: #ff5f52; }
.titlebar .yellow { background: #fdb843; }
.titlebar .green { background: #10ab4e; }
.titlebar h1 { flex: 1; margin: 0; padding-right: 104px; text-align: center; color: #444; font: 22px/28px "Liberation Sans", Arial, sans-serif; }

/* Tool bar */
.toolbar { flex: none; height: 46px; display: flex; align-items: center; padding-left: 9px; background: #414141; border-top: 1px solid #555; margin-bottom: 6px; }
.toolbar .grip { height: 36px; }
.modes { display: flex; margin-left: 6px; border: 1px solid #111; }
.mode { height: 36px; gap: 12px; background: linear-gradient(#565656, #444); width: 181px; }
.mode.on { width: 174px; background: #282828; border-right: 1px solid #111; }
.swoosh { width: 74px; height: 45px; background: linear-gradient(to right, #4c4c4c, #505050); clip-path: polygon(0 0, 100% 0, 62% 45%, 36% 100%, 0 100%); }
.views { display: flex; gap: 18px; padding: 7px 22px 7px 15px; border-right: 2px solid #222; }
.tools { display: flex; gap: 8px; margin-left: 15px; flex: 1; }
.tools button { width: 42px; height: 40px; color: #6b6b6b; }
.tools svg { width: 34px; height: 34px; }
.tools .on { background: #242424; border: 2px solid #111; }
.workspace { margin-right: 12px; }
.select { position: relative; border: 2px solid #1a1a1a; background: linear-gradient(#565656, #454545); height: 34px; display: flex; }
.select select { appearance: none; flex: 1; width: 100%; border: 0; background: none; color: inherit; font: inherit; padding: 0 10px; }
.ws { width: 259px; }
.ws::after { content: ""; position: absolute; right: 6px; top: 10px; border: 7px solid transparent; border-top: 11px solid #c8c8c8; border-bottom: 0; }
.ws::before { content: ""; position: absolute; right: 30px; top: 4px; bottom: 4px; width: 2px; background: #2c2c2c; }
.search { display: flex; align-items: center; height: 34px; border: 2px solid #151515; background: #a0a0a0; padding-left: 3px; }
.search input { flex: 1; min-width: 0; border: 0; background: none; font: inherit; color: #111; padding: 0 12px 0 10px; }
.help { width: 359px; margin-left: 14px; }

/* Panels */
.work { flex: 1; min-height: 0; display: flex; gap: 7px; padding-left: 2px; }
.left { width: 602px; flex: none; display: flex; flex-direction: column; }
.right { flex: 1; min-width: 0; display: flex; flex-direction: column; gap: 9px; }
.panel { display: flex; flex-direction: column; min-height: 0; min-width: 0; }
.body { flex: 1; min-height: 0; background: #424242; border: 2px solid #5a5a5a; border-top-color: #555; display: flex; flex-direction: column; }
.tabs { flex: none; display: flex; height: 36px; background: linear-gradient(#3a3a3a, #303030); }
.tab { flex: none; display: flex; align-items: center; white-space: nowrap; color: #8f8f8f; border-right: 2px solid #191919; border-top: 1px solid #4a4a4a; }
.tab.on { position: relative; height: 38px; margin-bottom: -2px; padding: 0 5px 0 7px; color: #d4d4d4; background: linear-gradient(#505050, #424242); border-top-color: #666; }
.tab .grip { margin-right: 5px; }
.wide { padding: 0 26px 0 19px; }
.cut { width: 36px; padding-right: 0; overflow: hidden; }
.x { margin-left: 7px; font-size: 24px; line-height: 24px; color: #bbb; }
.rest { flex: 1; }
.pm { width: 50px; color: #d0d0d0; border-right: 2px solid #191919; }
.end { width: 22px; display: flex; align-items: center; justify-content: center; }
.half { width: 8px; overflow: hidden; justify-content: flex-start; }
.focus .body { border-color: #c28e3c; }
.focus .tab.on { border: 2px solid #c28e3c; border-bottom: 0; padding: 0 5px; }

.files { flex: 732; }
.files .body { padding: 5px 8px 8px; }
.filebar { display: flex; align-items: center; gap: 20px; height: 42px; margin: 0 0 5px -5px; }
.filebar .open { width: 46px; height: 38px; border: 2px solid #c28e3c; background: #2b2f35; margin-right: -7px; }
.filebar button { flex: none; }
.filebar .search { flex: 1; margin-left: -2px; }
.del { color: #c8c8c8; margin-left: 2px; }
.listbox { flex: 1; min-height: 0; border: 2px solid #191919; display: flex; flex-direction: column; }
table { width: 100%; border-collapse: collapse; table-layout: fixed; flex: none; }
th { height: 36px; padding: 0 6px; text-align: left; font-weight: 500; background: linear-gradient(#575757, #434343); border-bottom: 2px solid #1c1c1c; position: relative; }
th + th { border-left: 2px solid #2c2c2c; }
.c1 { width: 340px; }
.c2 { width: 77px; }
th svg { position: absolute; right: 6px; top: 12px; }
td { height: 36px; padding: 0; border-bottom: 1px solid #353535; white-space: nowrap; font-size: 22px; }
td svg { display: inline-block; vertical-align: middle; margin: 0 11px 2px 48px; }
td:last-child { padding-left: 31px; }
.cur { color: #d6b479; }
.sel { background: #505050; }
.hscroll { display: flex; align-items: center; height: 24px; flex: none; margin-top: auto; border-top: 2px solid #222; background: #393939; padding: 0 6px; }
.hscroll .thumb { width: 123px; height: 22px; margin-left: 10px; background: #454545; border: 2px solid #1c1c1c; border-width: 0 2px; }
.hscroll .ar { margin-left: auto; }
.player { display: flex; gap: 8px; justify-content: center; }
.files .player { margin-top: 8px; }
.btn { width: 48px; height: 43px; border: 2px solid #1b1b1b; background: linear-gradient(#555, #424242); color: #cdcdcd; }
.btn:disabled { border-color: #343434; background: #434343; color: #707070; }
.trackbar { height: 20px; flex: none; padding: 8px 96px 2px 0; display: flex; }
.trackbar i { flex: 1; background: #454545; border: 1px solid #555; }

.media { flex: 174; }
.media .body { padding: 10px 0 8px 8px; }
.mediabar { display: flex; align-items: center; overflow: hidden; height: 34px; flex: none; padding-left: 6px; margin-bottom: 9px; }
.mediabar label { margin: 0 14px 0 auto; }
.ct { width: 228px; border-right: 0; }
.mediagrid { display: flex; flex: 1; min-height: 0; padding-right: 8px; }
.tree { width: 234px; border: 2px solid #191919; display: flex; flex-direction: column; }
.treemain { flex: 1; min-height: 0; display: flex; overflow: hidden; }
.treelist { flex: 1; overflow: hidden; }
.node { display: flex; align-items: center; gap: 13px; height: 38px; padding-left: 8px; }
.node .ad { margin-right: 4px; }
.child { padding-left: 76px; height: 36px; }
.vscroll { width: 22px; border-left: 2px solid #191919; background: #393939; display: flex; flex-direction: column; align-items: center; justify-content: space-between; padding: 8px 0; }
.tree .thumb { width: 118px; }
.corner { width: 20px; }
.split { height: 54px; margin: 16px 5px 0; }
.preview { flex: 1; }
.strip { height: 16px; border: 2px solid #191919; background: #505050; margin-bottom: 9px; }
.preview .player { margin-right: 4px; }

.history { flex: 310; margin-top: 8px; }
.history .body { padding: 8px 8px 0; }
.step { height: 36px; display: flex; align-items: center; gap: 15px; padding-left: 3px; background: #505050; border-bottom: 1px solid #333; }
.step b { font-weight: 600; }
.undo { flex: none; height: 56px; display: flex; justify-content: space-between; align-items: center; padding: 6px 10px 0 0; }
.undo svg { color: #707070; }

/* Editor */
.editor { flex: 1; }
.picker { height: 32px; gap: 20px; padding: 0 8px 0 10px; border: 2px solid #1b1b1b; }
.mixer { padding: 0 26px 0 21px; }
.editor .x { margin-right: 4px; }
.editor .body { padding: 14px 3px 0 13px; }
.stage { flex: 1; min-height: 0; display: grid; grid-template-columns: 1fr 116px; grid-template-rows: 54px 32px 48px 1fr 20px; }
.overview { display: flex; justify-content: space-between; align-items: center; position: relative; border: 2px solid #a87a34; outline: 1px solid #1b1108; background: linear-gradient(#6e6e6e, #444); }
.overview svg { position: absolute; inset: 0; width: 100%; height: 100%; }
.handle { width: 13px; height: 100%; background: linear-gradient(to right, #d3a04899, #c08a2bcc); border-right: 2px solid #e0aa4f; position: relative; }
.mid { position: relative; width: 14px; height: 13px; background: repeating-linear-gradient(to right, #ddd 0 2px, #444 2px 4px); }
.fit { padding: 8px 0 0 20px; }
.ruler { grid-row: 3; position: relative; background: #3a3a3a; border: 2px solid #191919; border-bottom: 0; }
#ticks { position: absolute; inset: 0; width: 100%; height: 100%; }
#times span { position: absolute; top: 4px; width: 80px; margin-left: -40px; text-align: center; font-size: 22px; }
#times .hms { left: 4px; margin: 0; text-align: left; font-size: 21px; }
.hover { position: absolute; left: 14%; top: 0; bottom: 0; width: 1px; background: #b5832e; }
.head { position: absolute; left: -11px; bottom: 0; z-index: 2; }
.snapbox { grid-row: 3; padding: 2px 0 0 12px; }
.snap { width: 39px; height: 38px; background: #222; border: 2px solid #111; }
.canvas { grid-row: 4; position: relative; background: #000; min-height: 0; }
#plot { position: absolute; inset: 0; width: 100%; height: 100%; }
.playhead { position: absolute; left: 0; top: 0; bottom: 0; width: 2px; background: #b32020; }
.fade { position: absolute; top: 22px; }
.in { left: 16px; }
.out { right: 17px; }
.hud { position: absolute; left: 50%; top: 5%; margin-left: -117px; width: 234px; height: 49px; display: flex; align-items: center; gap: 7px; background: #383838; padding-right: 8px; }
.hgrip { width: 15px; height: 100%; background: #505050; display: flex; align-items: center; justify-content: center; }
.gain { flex: 1; white-space: nowrap; }
.gain a { color: #d8952c; text-decoration: none; border-bottom: 2px dotted #b37c28; }
.pin { border-left: 1px solid #666; padding-left: 8px; width: 27px; height: 36px; padding-top: 9px; }
.ibeam { position: absolute; left: 13.5%; top: 66%; }
.scale { grid-row: 4; position: relative; background: #393939; border: solid #191919; border-width: 1px 2px 0 0; }
#dbticks { position: absolute; left: 1px; top: 0; width: 8px; height: 100%; }
#dbs span { position: absolute; left: 14px; margin-top: -14px; white-space: nowrap; }
#dbs .unit { top: 0; margin: 0; }
.zoomstrip { grid-row: 5; grid-column: 1 / 3; position: relative; display: flex; align-items: center; justify-content: center; background: linear-gradient(#585858, #444); border: solid #191919; border-width: 0 2px 2px 1px; }
.zoomstrip .grip { width: 46px; height: 8px; }
.zoomstrip .au { position: absolute; right: 30px; top: 5px; }
.transport { flex: none; height: 68px; display: flex; align-items: center; padding: 2px 10px 0 6px; }
.transport output { width: 484px; color: #d5922c; font-size: 36px; font-weight: 400; line-height: 36px; }
.transport output span { border-bottom: 2px dotted #a9762b; }
.buttons { display: flex; gap: 8px; flex: none; }
.looping { color: #79b842; }
.looping svg { filter: drop-shadow(0 0 3px #4f8a2a); }
.zooms { flex: 1; display: flex; justify-content: flex-end; gap: 20px; color: #c8c8c8; }

.lower { flex: none; height: 102px; display: flex; gap: 8px; }
.levels { flex: 1; }
.selview { width: 208px; }
.clip { width: 144px; overflow: hidden; border-right: 0; }
.levels .body { padding: 8px 10px 0 11px; }
.meter { height: 18px; background: linear-gradient(to left, transparent 16px, #666 16px, #666 17px, transparent 17px), #000; border: 2px solid #5c5c5c; border-left-color: #d4cf70; }
.marks { position: relative; height: 36px; margin-right: 17px; }
#lticks { width: 100%; height: 8px; }
#lnums span { position: absolute; top: 7px; width: 60px; margin-left: -30px; text-align: center; font-size: 18px; line-height: 24px; }
#lnums .first { left: 0; margin: 0; text-align: left; margin-left: -3px; }

.status { flex: none; display: flex; align-items: center; height: 37px; margin-top: 4px; margin-left: 2px; padding: 0 98px 2px 0; background: #424242; border-top: 2px solid #555; white-space: nowrap; font-size: 22px; }
.status span { height: 30px; line-height: 30px; border-right: 2px solid #252525; }
.msg { flex: 1; padding-left: 11px; }
.s1 { width: 95px; }
.s2 { width: 214px; }
.s3, .s4, .s6 { padding: 0 12px 0 14px; }
.s5 { padding: 0 13px 0 34px; }

/* Dock */
.dockarea { flex: none; height: 90px; padding: 0 267px 0 265px; background: linear-gradient(to right, #30241e, #251f1b 15%, #14110f); }
.dock { display: flex; align-items: center; justify-content: space-between; height: 90px; padding: 0 8px 6px 12px; border-radius: 8px 8px 0 0; background: linear-gradient(to right, #87766a, #7e706b 20%, #796a63 48%, #94887f 58%, #bdb9b5 68%, #86786f 78%, #6c5e56 90%, #514640); }
.dock button { position: relative; width: 60px; height: 60px; }
.dock svg { width: 60px; height: 60px; font-family: "Liberation Sans", sans-serif; }
.dock .on::after { content: ""; position: absolute; bottom: -15px; left: 27px; width: 7px; height: 7px; border-radius: 50%; background: #000; }
.dock .winthumb, .dock .winthumb svg { width: 66px; }
.sep { width: 2px; height: 68px; background: #453c37; margin: 0 4px 0 10px; }
.badge { position: absolute; right: -8px; top: -4px; width: 27px; height: 27px; border-radius: 50%; background: #ff4539; color: #fff; font: 17px/27px "Liberation Sans", sans-serif; text-align: center; }
```
FILE: script.js
```js
const $ = id => document.getElementById(id);
const line = (d, stroke, w) => `<path d="${d}" fill="none" stroke="${stroke}" stroke-width="${w}"/>`;
const W = 1641, H = 858, MID = 429, LENGTH = 86.817;
const pxPerSec = W / LENGTH;

// Time ruler
let minor = "", major = "", grid = "";
for (let s = 1; s < LENGTH; s++) {
  const x = Math.round(s * pxPerSec);
  if (s % 5) { minor += `M${x} 38v8`; continue; }
  major += `M${x} 33v13`;
  grid += `M${x} 0v${H}`;
  const label = document.createElement("span");
  label.textContent = `${Math.floor(s / 60)}:${String(s % 60).padStart(2, "0")}.0`;
  label.style.left = (s / LENGTH * 100) + "%";
  $("times").append(label);
}
$("ticks").innerHTML = line(minor + major, "#c4c4c4", 2);

// Amplitude scale
const level = db => Math.pow(10, db / 20) * MID;
let ticks = "M0 1h7M0 857h7M0 429h7";
for (const db of [-.25, -.5, -.75, -1.5, -2, -2.5, -3.5, -4, -4.5, -5, -5.5, -7, -8, -10, -11, -14, -16, -21])
  for (const y of [MID - level(db), MID + level(db)]) ticks += `M0 ${Math.round(y)}h3`;
const place = (text, y) => {
  const s = document.createElement("span");
  s.textContent = text;
  s.style.top = (y / H * 100) + "%";
  $("dbs").append(s);
};
grid += `M0 1h${W}M0 ${H - 2}h${W}`;
for (const db of [1, 3, 6, 9, 12, 18, 24])
  for (const y of [MID - level(-db), MID + level(-db)]) {
    place("–" + db, y);
    ticks += `M0 ${Math.round(y)}h7`;
    grid += `M0 ${Math.round(y)}h${W}`;
  }
place("–∞", MID);
$("dbticks").innerHTML = line(ticks, "#c4c4c4", 2);

// Waveform: three loud peaks in each beat, with smaller spikes between them
const BEAT = 51.3, PEAKS = [4, 18, 37, 55.3, -14.3];
const noise = n => { const v = Math.sin(n * 12.9898) * 43758.5453; return v - Math.floor(v); };
let top_ = "", bottom = "";
for (let x = 0; x <= W; x += 1) {
  const d = Math.min(...PEAKS.map(p => Math.abs((x % BEAT) - p)));
  const n = Math.floor(x / 2);
  let up = 17 + Math.max(0, 9 - d * 1.8), down = 20 + Math.max(0, 12 - d * 1.8);
  if (d <= 1) { up = 38; down = 42; }
  else {
    if (n % 3 === 0) up = 24 + noise(n) * 11;
    if (n % 3 === 1) down = 27 + noise(n + 3) * 8;
    if (noise(n + 11) > 0.8) down = 16;
  }
  top_ += `L${x} ${(MID - up).toFixed(1)}`;
  bottom = `L${x} ${(MID + down).toFixed(1)}` + bottom;
}
$("plot").innerHTML = line(grid, "#0c2815", 2) +
  `<path d="M0 ${MID}${top_}${bottom}Z" fill="#1dc8a0"/>` + line(`M0 ${MID}h${W}`, "#3ecf9c", 2);

let mini = "";
for (let x = 12; x < 1626; x += 3) mini += `M${x} ${23 - Math.round(noise(x) * 3)}V${27 + Math.round(noise(x + 1) * 3)}`;
$("mini").innerHTML = line(mini, "#6aab94", 1) + line("M12 25H1626", "#7ac3a8", 2);

// Level meter marks, -60 dB to 0 dB
let lt = "";
for (let i = 0; i <= 60; i++) {
  const x = Math.min(1517, Math.max(1, Math.round(i * 1518 / 60)));
  lt += `M${x} 0v${i % 3 ? 4 : 8}`;
  if (i && i % 3 === 0) {
    const s = document.createElement("span");
    s.textContent = i === 60 ? "0" : "–" + (60 - i);
    s.style.left = (i / 60 * 100) + "%";
    $("lnums").append(s);
  }
}
$("lticks").innerHTML = line(lt, "#c4c4c4", 2);
```
